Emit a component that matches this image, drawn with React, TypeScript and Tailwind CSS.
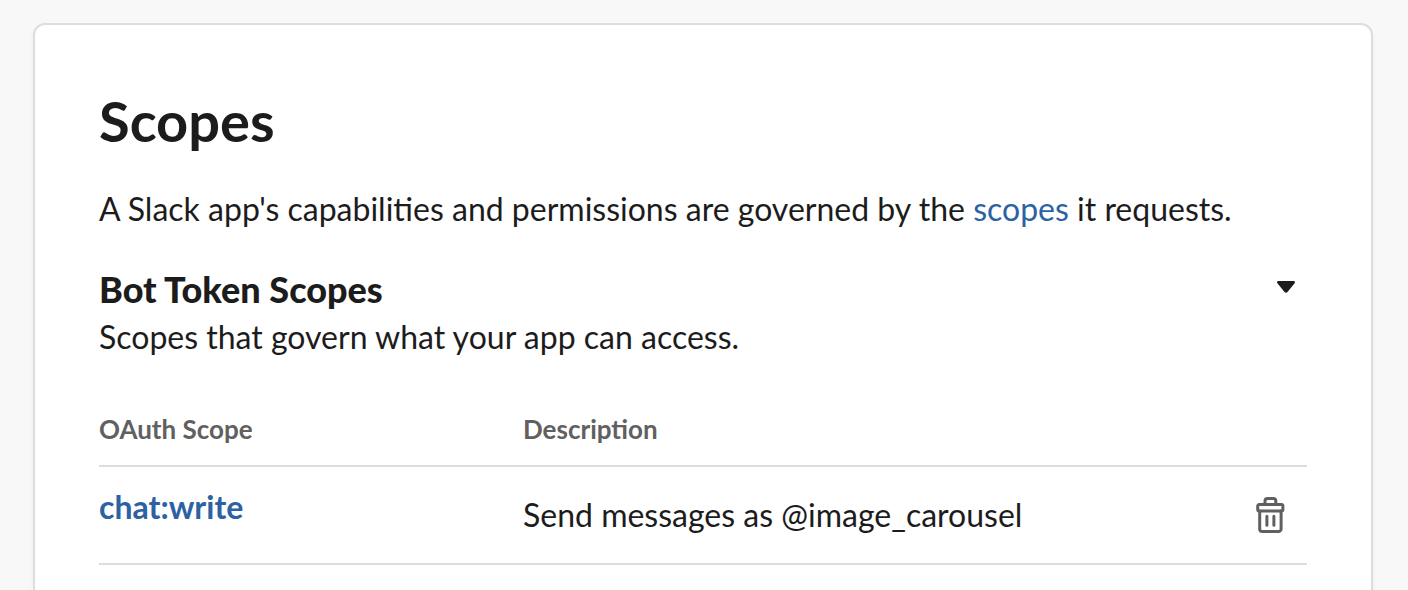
export default function App() {
  return (
    <div className="h-screen overflow-hidden bg-[#f8f8f8] pl-[33px] pr-[35px] pt-[23px] font-['Lato',sans-serif] text-[32px] leading-[48px] text-[#1d1c1d]">
      <main className="min-h-screen rounded-xl border-2 border-[#dddddd] bg-white px-16 pt-16 shadow-[0_2px_4px_rgba(0,0,0,0.04)]">
        <h1 className="text-[56px] font-bold leading-[64px]">Scopes</h1>
        <p className="mt-8">
          A Slack app's capabilities and permissions are governed by the{" "}
          <a href="#scopes" className="text-[#2c62a2]">scopes</a> it requests.
        </p>
        <section className="mt-8">
          <div className="flex items-center justify-between pr-3">
            <h2 className="text-[36px] font-black leading-[48px]">Bot Token Scopes</h2>
            <button type="button" aria-label="Collapse bot token scopes" className="pb-1">
              <svg className="block" width="18" height="12" viewBox="0 0 18 12" fill="currentColor">
                <path d="M1.300 0h15.400c1.100 0 1.600 1.300.9 2.200l-6.900 8.600c-.9 1.300-2.500 1.300-3.400 0L.4 2.200C-.3 1.300.2 0 1.300 0z" />
              </svg>
            </button>
          </div>
          <p>Scopes that govern what your app can access.</p>
          <table className="mt-10 w-full table-fixed border-collapse text-left">
            <thead>
              <tr className="border-b-2 border-[#dddddd] text-[26px] leading-[40px] text-[#616061]">
                <th className="w-[424px] pb-4 pt-2 font-bold">OAuth Scope</th>
                <th className="pb-4 pt-2 font-bold">Description</th>
                <th className="w-20" aria-label="Actions"></th>
              </tr>
            </thead>
            <tbody>
              <tr className="border-b-2 border-[#dddddd]">
                <td className="pb-8 pt-4 align-top font-bold">
                  <a href="#chat-write" className="text-[#2c62a2]">chat:write</a>
                </td>
                <td className="align-middle">Send messages as @image_carousel</td>
                <td className="pr-5 align-middle">
                  <button type="button" aria-label="Delete chat:write" className="ml-auto block text-[#616061]">
                    <svg className="block" width="32" height="36" viewBox="-1 0 32 36" fill="none" stroke="currentColor" strokeWidth="3" strokeLinejoin="round" strokeLinecap="round">
                      <path d="M9 7V4a2.500 2.500 0 0 1 2.500-2.500h5.800a2.500 2.500 0 0 1 2.500 2.500v3" />
                      <rect x="1.700" y="7.600" width="25.200" height="6.400" rx="1.500" />
                      <path d="M3.700 14v18a2.500 2.500 0 0 0 2.500 2.500h16.400a2.500 2.500 0 0 0 2.500-2.500V14M10.900 19.300v9M17.900 19.300v9" />
                    </svg>
                  </button>
                </td>
              </tr>
            </tbody>
          </table>
        </section>
      </main>
    </div>
  );
}
